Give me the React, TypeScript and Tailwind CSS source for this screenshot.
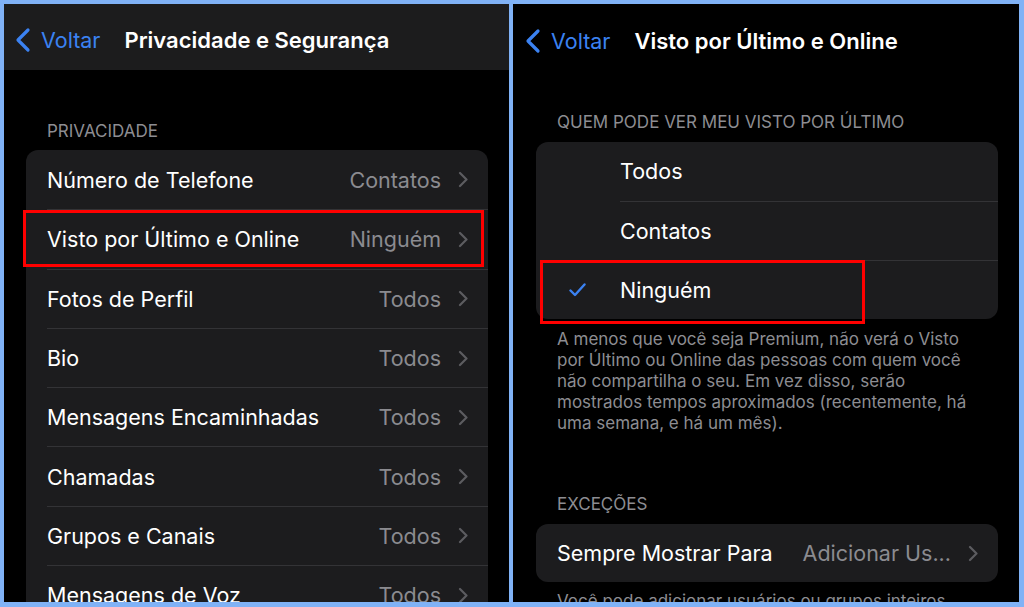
import React from 'react';

// Linhas da tela de privacidade
const privacyRows = [
  { label: 'Número de Telefone', value: 'Contatos' },
  { label: 'Visto por Último e Online', value: 'Ninguém', marked: true },
  { label: 'Fotos de Perfil', value: 'Todos' },
  { label: 'Bio', value: 'Todos' },
  { label: 'Mensagens Encaminhadas', value: 'Todos' },
  { label: 'Chamadas', value: 'Todos' },
  { label: 'Grupos e Canais', value: 'Todos' },
  { label: 'Mensagens de Voz', value: 'Todos' },
];

const options = ['Todos', 'Contatos', 'Ninguém'];

function Chevron() {
  return (
    <svg width="10" height="17" viewBox="0 0 10 17" fill="none" className="shrink-0">
      <path d="M2 2l6.5 6.5L2 15" stroke="#5c5c60" strokeWidth="2.2" strokeLinecap="round" strokeLinejoin="round" />
    </svg>
  );
}

function BackButton() {
  return (
    <div className="flex items-center gap-[9px] text-[#3b82f2]">
      <svg width="18" height="26" viewBox="0 0 18 26" fill="none">
        <path d="M14 3L4 13l10 10" stroke="#3b82f2" strokeWidth="3.2" strokeLinecap="round" strokeLinejoin="round" />
      </svg>
      <span className="text-[21.5px]">Voltar</span>
    </div>
  );
}

export default function App() {
  return (
    <div className="w-[1024px] h-[607px] bg-[#80b2f6] flex gap-[4px] pt-[4px] pl-[4px] pr-[5px] pb-[5px] font-['Inter','Noto_Sans',sans-serif] overflow-hidden">
      {/* Painel esquerdo */}
      <div className="w-[505px] h-[598px] bg-black overflow-hidden flex flex-col">
        <div className="h-[66px] shrink-0 bg-[#1c1c1d] flex items-center pl-[10px] pt-[6px]">
          <BackButton />
          <span className="ml-[24px] text-[22px] font-semibold text-white">Privacidade e Segurança</span>
        </div>
        <div className="pl-[22px] pr-[21px]">
          <p className="pt-[51px] pl-[21px] text-[17px] text-[#8d8d92] leading-[20px]">PRIVACIDADE</p>
          <div className="mt-[9px] bg-[#1c1c1e] rounded-[12px]">
            {privacyRows.map((row, i) => (
              <div key={row.label} className="relative pl-[21px]">
                <div
                  className={`h-[59.3px] flex items-center pr-[20px] ${i > 0 ? 'border-t border-[#333336]' : ''}`}
                >
                  <span className="flex-1 text-[21.5px] text-white">{row.label}</span>
                  <span className="text-[21.5px] text-[#8b8b90] mr-[17px]">{row.value}</span>
                  <Chevron />
                </div>
                {row.marked && (
                  <div className="absolute left-[-3px] right-[4px] top-[1px] h-[57px] border-[3px] border-[#ff0000]" />
                )}
              </div>
            ))}
          </div>
        </div>
      </div>

      {/* Painel direito */}
      <div className="w-[506px] h-[598px] bg-black overflow-hidden flex flex-col">
        <div className="h-[66px] shrink-0 flex items-center pl-[11px] pt-[8px]">
          <BackButton />
          <span className="ml-[24px] text-[22px] font-semibold text-white">Visto por Último e Online</span>
        </div>
        <div className="pl-[23px] pr-[21px]">
          <p className="pt-[42px] pl-[21px] text-[17px] text-[#8d8d92] leading-[20px]">QUEM PODE VER MEU VISTO POR ÚLTIMO</p>
          <div className="mt-[10px] bg-[#1c1c1e] rounded-[12px]">
            {options.map((opt, i) => (
              <div key={opt} className="relative flex items-center h-[59px]">
                <div className="w-[84px] shrink-0 flex justify-center pr-[2px]">
                  {opt === 'Ninguém' && (
                    <svg width="17" height="14" viewBox="0 0 17 14" fill="none">
                      <path d="M1.5 7.5l4.5 4.5L15.5 1.5" stroke="#3b82f2" strokeWidth="2.4" strokeLinecap="round" strokeLinejoin="round" />
                    </svg>
                  )}
                </div>
                <div className={`flex-1 h-full flex items-center ${i > 0 ? 'border-t border-[#333336]' : ''}`}>
                  <span className="text-[21.5px] text-white">{opt}</span>
                </div>
                {opt === 'Ninguém' && (
                  <div className="absolute left-[4px] w-[325px] top-[0px] h-[64px] border-[3px] border-[#ff0000]" />
                )}
              </div>
            ))}
          </div>
          <p className="mt-[10px] pl-[21px] pr-[20px] text-[17px] leading-[21px] text-[#8d8d92]">
            A menos que você seja Premium, não verá o Visto por Último ou Online das pessoas com quem você não
            compartilha o seu. Em vez disso, serão mostrados tempos aproximados (recentemente, há uma semana, e há um
            mês).
          </p>
          <p className="mt-[60px] pl-[21px] text-[17px] text-[#8d8d92] leading-[20px]">EXCEÇÕES</p>
          <div className="mt-[10px] h-[58px] bg-[#1c1c1e] rounded-[12px] flex items-center pl-[21px] pr-[20px]">
            <span className="flex-1 text-[21.5px] text-white">Sempre Mostrar Para</span>
            <span className="text-[21.5px] text-[#8b8b90] mr-[17px]">Adicionar Us...</span>
            <Chevron />
          </div>
          <p className="mt-[9px] pl-[21px] text-[17px] leading-[21px] text-[#8d8d92] whitespace-nowrap">
            Você pode adicionar usuários ou grupos inteiros
          </p>
        </div>
      </div>
    </div>
  );
}
